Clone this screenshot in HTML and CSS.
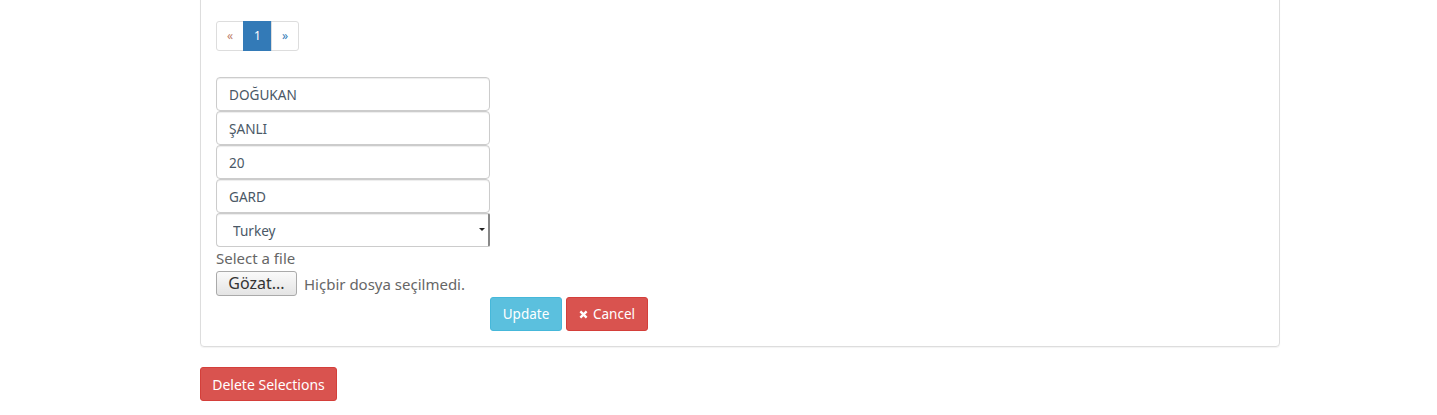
FILE: index.html
```html
<!DOCTYPE html>
<html>
<head>
<meta charset="utf-8">
<link rel="stylesheet" href="styles.css">
</head>
<body>
<div class="container">
  <div class="panel">
    <div class="panel-body">
      <ul class="pagination">
        <li><a class="prev">&laquo;</a></li>
        <li><a class="active">1</a></li>
        <li><a class="next">&raquo;</a></li>
      </ul>
      <form class="edit-form">
        <input class="form-control" type="text" value="DOĞUKAN">
        <input class="form-control" type="text" value="ŞANLI">
        <input class="form-control" type="text" value="20">
        <input class="form-control" type="text" value="GARD">
        <div class="select-wrap">
          <select class="form-control select">
            <option>Turkey</option>
          </select>
          <span class="select-arrow"></span>
        </div>
        <label class="file-label">Select a file</label>
        <div class="file-input">
          <span class="file-btn">Gözat...</span>
          <span class="file-text">Hiçbir dosya seçilmedi.</span>
        </div>
        <div class="actions">
          <button type="button" class="btn btn-info">Update</button>
          <button type="button" class="btn btn-danger"><svg class="icon" viewBox="0 0 10 10" width="9" height="9"><path d="M1.5 1.5 L8.5 8.5 M8.5 1.5 L1.5 8.5" stroke="#fff" stroke-width="2.6" stroke-linecap="butt"/></svg>Cancel</button>
        </div>
      </form>
    </div>
  </div>
  <button type="button" class="btn btn-danger delete">Delete Selections</button>
</div>
</body>
</html>
```

FILE: styles.css
```css
* { box-sizing: border-box; }
html, body { margin: 0; padding: 0; background: #fff; }
body {
  font-family: "Noto Sans", "Open Sans", sans-serif;
  font-size: 13px;
  color: #555;
}
.container {
  width: 1080px;
  margin-left: 200px;
}
.panel {
  margin-top: -20px;
  border: 1px solid #ddd;
  border-radius: 0 0 4px 4px;
  box-shadow: 0 1px 1px rgba(0,0,0,0.05);
  margin-bottom: 20px;
}
.panel-body {
  padding: 40px 15px 15px 15px;
}
.pagination {
  display: flex;
  list-style: none;
  margin: 0 0 26px 0;
  padding: 0;
}
.pagination a {
  display: block;
  height: 30px;
  line-height: 28px;
  font-size: 12px;
  text-align: center;
  border: 1px solid #ddd;
  margin-left: -1px;
  color: #337ab7;
  background: #fff;
}
.pagination li:first-child a { margin-left: 0; border-radius: 3px 0 0 3px; }
.pagination li:last-child a { border-radius: 0 3px 3px 0; }
.pagination .prev { width: 28px; color: #c0806a; }
.pagination .active { width: 29px; background: #337ab7; border-color: #337ab7; color: #fff; }
.pagination .next { width: 28px; }
.edit-form { display: flex; flex-direction: column; align-items: flex-start; }
.form-control {
  display: block;
  width: 274px;
  height: 34px;
  padding: 6px 12px;
  font-family: "Noto Sans", "Open Sans", sans-serif;
  font-size: 13.6px;
  color: #4a5866;
  background: #fff;
  border: 1px solid #ccc;
  border-radius: 4px;
  box-shadow: inset 0 1px 1px rgba(0,0,0,0.075);
  margin: 0;
}
.select-wrap { position: relative; width: 274px; height: 34px; }
.select {
  -webkit-appearance: none;
  appearance: none;
  padding-left: 16px;
  border-right: 2px solid #888;
  border-radius: 4px 2px 2px 4px;
}
.select-arrow {
  position: absolute;
  right: 5px;
  top: 15px;
  width: 0;
  height: 0;
  border-left: 3px solid transparent;
  border-right: 3px solid transparent;
  border-top: 3px solid #222;
  pointer-events: none;
}
.file-label {
  font-size: 15px;
  color: #666;
  margin-top: 1px;
  line-height: 21px;
}
.file-input {
  display: flex;
  align-items: center;
  margin-top: 2px;
  height: 25px;
}
.file-btn {
  display: inline-block;
  height: 25px;
  width: 81px;
  line-height: 22px;
  text-align: center;
  font-size: 16px;
  color: #333;
  border: 1px solid #aaa;
  border-radius: 3px;
  background: linear-gradient(#fafafa, #e4e4e4);
}
.file-text {
  font-size: 15px;
  color: #666;
  margin-left: 7px;
}
.actions {
  display: flex;
  gap: 4px;
  margin-left: 274px;
  margin-top: 1px;
}
.btn {
  display: inline-flex;
  align-items: center;
  justify-content: center;
  height: 34px;
  padding: 0 12px;
  font-family: "Noto Sans", "Open Sans", sans-serif;
  font-size: 13.5px;
  color: #fff;
  white-space: nowrap;
  border: 1px solid transparent;
  border-radius: 3px;
  cursor: pointer;
}
.btn-info { background: #5bc0de; border-color: #46b8da; width: 72px; }
.btn-danger { background: #d9534f; border-color: #d43f3a; }
.actions .btn-danger { width: 82px; }
.icon { margin-right: 5px; }
.delete { width: 137px; padding: 0 8px; font-size: 14px; }
```
